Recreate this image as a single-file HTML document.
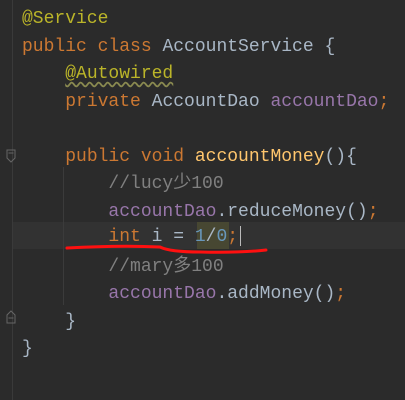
<!DOCTYPE html><html><head><style>
body{margin:0;width:405px;height:400px;background:#2b2b2b;overflow:hidden;position:relative;font-family:"Liberation Mono","Noto Sans CJK SC",monospace;font-size:18px}
.g{position:absolute;left:12px;top:0;width:1px;height:400px;background:#3a3a3a}
.l{position:absolute;left:22px;white-space:pre;line-height:27.5px;height:27.5px;color:#a9b7c6}
.k{color:#cc7832}.a{color:#bbb529}.f{color:#ffc66d}.v{color:#9876aa}.c{color:#808080}.n{color:#6897bb}
.hl{position:absolute;left:13px;top:222px;width:392px;height:27px;background:#323232}
</style></head><body>
<div class="g"></div>
<div class="hl"></div>
<div style="position:absolute;left:63px;top:167px;width:1px;height:138px;background:#3b3b3b"></div>
<div style="position:absolute;left:197px;top:222px;width:32px;height:27px;background:#474732"></div>
<div class="l" style="top:6px"><span class="a">@Service</span></div>
<div class="l" style="top:33.5px"><span class="k">public class </span>AccountService {</div>
<div class="l" style="top:61px">    <span class="a" style="text-decoration:underline wavy #8a8a50;text-underline-offset:3px">@Autowired</span></div>
<div class="l" style="top:88.5px">    <span class="k">private </span>AccountDao <span class="v">accountDao</span><span class="k">;</span></div>
<div class="l" style="top:143.5px">    <span class="k">public void </span><span class="f">accountMoney</span>(){</div>
<div class="l" style="top:171px">        <span class="c">//lucy少100</span></div>
<div class="l" style="top:198.5px">        <span class="v">accountDao</span>.reduceMoney()<span class="k">;</span></div>
<div class="l" style="top:224px">        <span class="k">int </span>i = <span class="n">1</span>/<span class="n">0</span><span class="k">;</span></div>
<div style="position:absolute;left:240px;top:226px;width:1px;height:20px;background:#bbb"></div>
<div class="l" style="top:253.5px">        <span class="c">//mary多100</span></div>
<div class="l" style="top:281px">        <span class="v">accountDao</span>.addMoney()<span class="k">;</span></div>
<div class="l" style="top:308.5px">    }</div>
<div class="l" style="top:336px">}</div>
<svg style="position:absolute;left:0;top:0" width="405" height="400">
<path d="M67 248 Q120 245 160 247 Q170 252 200 252 Q240 253 266 250" stroke="#ff1010" stroke-width="3" fill="none" stroke-linecap="round"/>
<path d="M7 150h8v8l-4 4l-4-4z" stroke="#666" fill="none"/><path d="M8.5 153h5" stroke="#666"/>
<path d="M7 323h8v-8l-4-4l-4 4z" stroke="#666" fill="none"/><path d="M8.5 318h5" stroke="#666"/>
</svg>
</body></html>
